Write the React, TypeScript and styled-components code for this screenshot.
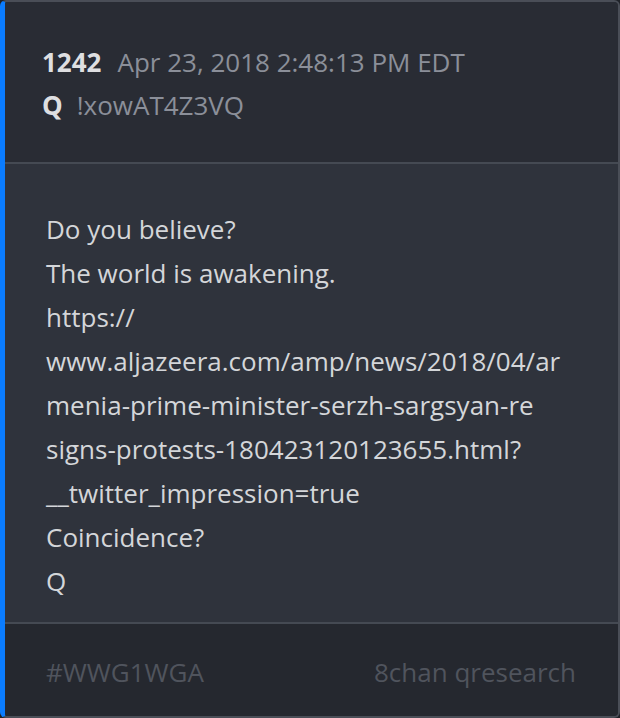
import styled, { createGlobalStyle } from "styled-components";

const GlobalStyle = createGlobalStyle`
    html, body {
        margin: 0;
        padding: 0;
        background: #1f2228;
    }
    body {
        font-family: "Open Sans", "DejaVu Sans", sans-serif;
    }
`

const post = {
    id: 1242,
    date: "Apr 23, 2018 2:48:13 PM EDT",
    author: "Q",
    trip: "!xowAT4Z3VQ",
    lines: [
        "Do you believe?",
        "The world is awakening.",
        "https://",
        "www.aljazeera.com/amp/news/2018/04/ar",
        "menia-prime-minister-serzh-sargsyan-re",
        "signs-protests-180423120123655.html?",
        "__twitter_impression=true",
        "Coincidence?",
        "Q",
    ],
    tag: "#WWG1WGA",
    source: "8chan qresearch",
}

function App() {
    return (
        <>
            <GlobalStyle />
            <Card>
                <Header>
                    <MetaRow>
                        <PostNumber>{post.id}</PostNumber>
                        <MetaText>{post.date}</MetaText>
                    </MetaRow>
                    <MetaRow>
                        <Author>{post.author}</Author>
                        <MetaText>{post.trip}</MetaText>
                    </MetaRow>
                </Header>
                <Body>
                    {post.lines.map((line, i) => (
                        <Line key={i}>{line}</Line>
                    ))}
                </Body>
                <Footer>
                    <FooterText>{post.tag}</FooterText>
                    <FooterText>{post.source}</FooterText>
                </Footer>
            </Card>
        </>
    )
}

export default App

const Card = styled.div`
    box-sizing: border-box;
    width: 620px;
    height: 718px;
    display: flex;
    flex-direction: column;
    border: 2px solid #4a4e57;
    border-left: 5px solid #0a7cff;
    border-radius: 6px;
    overflow: hidden;
    background: #2f333c;
`

const Header = styled.div`
    background: #292c34;
    padding: 39px 40px 35px 37px;
    border-bottom: 2px solid #454a53;
`

const MetaRow = styled.div`
    display: flex;
    align-items: baseline;
    gap: 16px;
    line-height: 43px;
    font-size: 26px;
`

const PostNumber = styled.span`
    font-weight: 700;
    color: #dedfe1;
`

const Author = styled.span`
    font-weight: 700;
    color: #dedfe1;
    margin-right: -2px;
`

const MetaText = styled.span`
    color: #8b8f99;
`

const Body = styled.div`
    flex: 1;
    padding: 43px 40px 17px 41px;
    border-bottom: 2px solid #454a53;
`

const Line = styled.div`
    font-size: 26px;
    line-height: 44px;
    color: #d4d6d9;
    white-space: nowrap;
`

const Footer = styled.div`
    display: flex;
    justify-content: space-between;
    align-items: center;
    box-sizing: border-box;
    height: 92px;
    padding: 4px 42px 0 41px;
    background: #25282f;
`

const FooterText = styled.span`
    font-size: 26px;
    color: #50545d;
`
